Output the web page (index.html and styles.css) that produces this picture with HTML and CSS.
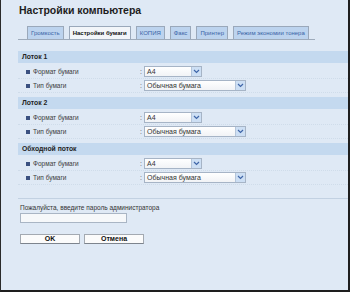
FILE: index.html
```html
<!DOCTYPE html>
<html lang="ru">
<head>
    <meta charset="UTF-8">
    <title>Настройки компьютера</title>
    <link rel="stylesheet" href="styles.css">
</head>
<body>
    <div class="screen">
        <h1 class="title">Настройки компьютера</h1>

        <div class="tabs">
            <span class="tab">Громкость</span>
            <span class="tab active">Настройки бумаги</span>
            <span class="tab">КОПИЯ</span>
            <span class="tab">Факс</span>
            <span class="tab">Принтер</span>
            <span class="tab">Режим экономии тонера</span>
        </div>

        <div class="section">
            <div class="section-head">Лоток 1</div>
            <div class="row">
                <span class="label"><i class="bullet"></i>Формат бумаги</span>
                <span class="colon">:</span>
                <span class="select short">A4<i class="arrow"><svg width="7" height="5" viewBox="0 0 7 5"><path d="M1 1 L3.5 3.5 L6 1" fill="none" stroke="#3f66a8" stroke-width="1.2"/></svg></i></span>
            </div>
            <div class="row">
                <span class="label"><i class="bullet"></i>Тип бумаги</span>
                <span class="colon">:</span>
                <span class="select long">Обычная бумага<i class="arrow"><svg width="7" height="5" viewBox="0 0 7 5"><path d="M1 1 L3.5 3.5 L6 1" fill="none" stroke="#3f66a8" stroke-width="1.2"/></svg></i></span>
            </div>
        </div>

        <div class="section">
            <div class="section-head">Лоток 2</div>
            <div class="row">
                <span class="label"><i class="bullet"></i>Формат бумаги</span>
                <span class="colon">:</span>
                <span class="select short">A4<i class="arrow"><svg width="7" height="5" viewBox="0 0 7 5"><path d="M1 1 L3.5 3.5 L6 1" fill="none" stroke="#3f66a8" stroke-width="1.2"/></svg></i></span>
            </div>
            <div class="row">
                <span class="label"><i class="bullet"></i>Тип бумаги</span>
                <span class="colon">:</span>
                <span class="select long">Обычная бумага<i class="arrow"><svg width="7" height="5" viewBox="0 0 7 5"><path d="M1 1 L3.5 3.5 L6 1" fill="none" stroke="#3f66a8" stroke-width="1.2"/></svg></i></span>
            </div>
        </div>

        <div class="section">
            <div class="section-head">Обходной поток</div>
            <div class="row">
                <span class="label"><i class="bullet"></i>Формат бумаги</span>
                <span class="colon">:</span>
                <span class="select short">A4<i class="arrow"><svg width="7" height="5" viewBox="0 0 7 5"><path d="M1 1 L3.5 3.5 L6 1" fill="none" stroke="#3f66a8" stroke-width="1.2"/></svg></i></span>
            </div>
            <div class="row">
                <span class="label"><i class="bullet"></i>Тип бумаги</span>
                <span class="colon">:</span>
                <span class="select long">Обычная бумага<i class="arrow"><svg width="7" height="5" viewBox="0 0 7 5"><path d="M1 1 L3.5 3.5 L6 1" fill="none" stroke="#3f66a8" stroke-width="1.2"/></svg></i></span>
            </div>
        </div>

        <div class="auth">
            <div class="auth-text">Пожалуйста, введите пароль администратора</div>
            <div class="password"></div>
            <div class="buttons">
                <span class="btn">OK</span>
                <span class="btn">Отмена</span>
            </div>
        </div>
    </div>
</body>
</html>
```

FILE: styles.css
```css
body {
    margin: 0;
    font-family: "Liberation Sans", Arial, sans-serif;
}
.screen {
    width: 350px;
    height: 292px;
    box-sizing: border-box;
    background-color: #dfe9f5;
    border-left: 1px solid #2a2a2a;
    border-right: 2px solid #1e1e1e;
    border-bottom: 2px solid #1e1e1e;
    overflow: hidden;
}
.title {
    margin: 0;
    padding: 4px 0 0 18px;
    font-size: 10.5px;
    line-height: 13px;
    color: #1d1d1d;
}
.tabs {
    display: flex;
    gap: 5px;
    width: 288px;
    margin: 9px 0 0 17px;
    padding-left: 9px;
    border-bottom: 1px solid #9eabbb;
}
.tab {
    height: 12px;
    padding: 0 3px;
    white-space: nowrap;
    font-size: 6px;
    line-height: 12px;
    color: #3a63a6;
    background-color: #bcd3ee;
    border: 1px solid #9aa8ba;
    border-bottom: none;
}
.tab.active {
    color: #111111;
    font-weight: bold;
    background-color: #f2f5f9;
}
.section {
    margin: 11px 0 0 17px;
}
.section + .section {
    margin-top: 4px;
}
.section-head {
    height: 12px;
    padding-left: 4px;
    font-size: 6.8px;
    font-weight: bold;
    line-height: 12px;
    color: #222222;
    background-color: #c4d9ef;
    margin-bottom: 2px;
}
.row {
    display: flex;
    align-items: center;
    height: 14px;
    border-bottom: 1px dotted #cfdcea;
    box-sizing: border-box;
}
.label {
    display: flex;
    align-items: center;
    width: 122px;
    padding-left: 8px;
    box-sizing: border-box;
    font-size: 6.5px;
    color: #3c3c3c;
}
.bullet {
    width: 4px;
    height: 4px;
    margin-right: 3px;
    background-color: #3a5080;
}
.colon {
    width: 4px;
    font-size: 7px;
    color: #555555;
}
.select {
    position: relative;
    height: 11px;
    box-sizing: border-box;
    padding-left: 2px;
    font-size: 7px;
    line-height: 9px;
    color: #333333;
    background: linear-gradient(#ffffff, #f1f3f6);
    border: 1px solid #a6b4c6;
}
.select.short {
    width: 58px;
}
.select.long {
    width: 102px;
}
.arrow {
    position: absolute;
    top: 0;
    right: 0;
    width: 9px;
    height: 9px;
    display: flex;
    align-items: center;
    justify-content: center;
    background-color: #cddff4;
    border-left: 1px solid #b4c5da;
}
.auth {
    margin: 13px 0 0 17px;
    padding: 4px 0 0 2px;
    border-top: 1px solid #c2d1e2;
}
.auth-text {
    font-size: 6.5px;
    line-height: 9px;
    color: #333333;
}
.password {
    width: 107px;
    height: 10px;
    margin-top: 1px;
    background-color: #f6f8fa;
    border: 1px solid #a9b5c4;
    box-sizing: border-box;
}
.buttons {
    display: flex;
    gap: 4px;
    margin-top: 11px;
}
.btn {
    width: 60px;
    height: 10px;
    box-sizing: border-box;
    text-align: center;
    font-size: 7px;
    font-weight: bold;
    line-height: 8px;
    color: #111111;
    background-color: #fbfbfb;
    border: 1px solid #a3a9b1;
    border-bottom-color: #7d848d;
}
```
